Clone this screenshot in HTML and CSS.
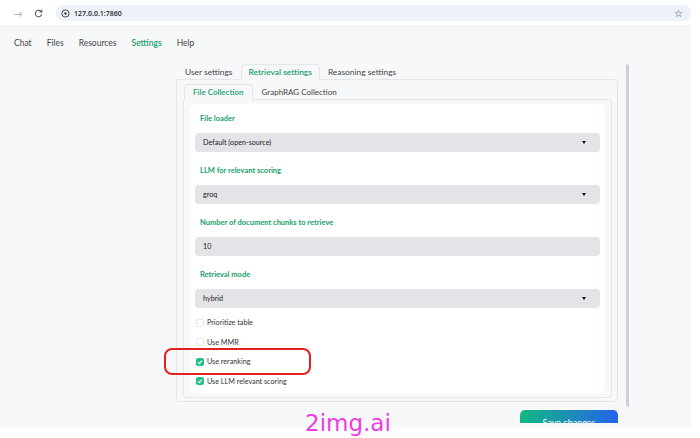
FILE: index.html
```html
<!DOCTYPE html>
<html lang="en">

<head>
    <meta charset="UTF-8">
    <meta name="viewport" content="width=device-width, initial-scale=1.0">
    <title>Settings</title>
    <link rel="stylesheet" href="styles.css">
</head>

<body>

    <!-- Browser bar -->
    <div class="chrome">
        <span class="chrome-btn">&#8594;</span>
        <span class="chrome-btn">
            <svg width="9" height="9" viewBox="0 0 10 10"><path d="M8.2 3.2A3.6 3.6 0 1 0 8.6 6" fill="none" stroke="#555" stroke-width="1.2"/><path d="M6.2 3.4H8.8V0.8" fill="none" stroke="#555" stroke-width="1.2"/></svg>
        </span>
        <div class="address">
            <svg width="9" height="9" viewBox="0 0 10 10"><circle cx="5" cy="5" r="4" fill="none" stroke="#444" stroke-width="1.1"/><circle cx="5" cy="5" r="1.4" fill="#444"/></svg>
            <span class="url">127.0.0.1:7860</span>
            <span class="star">&#9734;</span>
        </div>
    </div>

    <div class="page">
        <nav class="nav">
            <span>Chat</span>
            <span>Files</span>
            <span>Resources</span>
            <span class="active">Settings</span>
            <span>Help</span>
        </nav>

        <main class="settings">
            <div class="tabs top">
                <span class="tab">User settings</span>
                <span class="tab selected">Retrieval settings</span>
                <span class="tab">Reasoning settings</span>
            </div>

            <div class="panel">
                <div class="tabs sub">
                    <span class="tab selected">File Collection</span>
                    <span class="tab">GraphRAG Collection</span>
                </div>

                <div class="subpanel">
                    <div class="card">
                        <div class="field">
                            <label>File loader</label>
                            <div class="select">Default (open-source)</div>
                        </div>
                        <div class="field">
                            <label>LLM for relevant scoring</label>
                            <div class="select">groq</div>
                        </div>
                        <div class="field">
                            <label>Number of document chunks to retrieve</label>
                            <div class="input">10</div>
                        </div>
                        <div class="field">
                            <label>Retrieval mode</label>
                            <div class="select">hybrid</div>
                        </div>

                        <div class="checks">
                            <div class="check"><span class="box"></span>Prioritize table</div>
                            <div class="check"><span class="box"></span>Use MMR</div>
                            <div class="check"><span class="box on"><svg width="6" height="6" viewBox="0 0 6 6"><path d="M1 3.2L2.5 4.6L5 1.5" fill="none" stroke="#fff" stroke-width="1.1"/></svg></span>Use reranking</div>
                            <div class="check"><span class="box on"><svg width="6" height="6" viewBox="0 0 6 6"><path d="M1 3.2L2.5 4.6L5 1.5" fill="none" stroke="#fff" stroke-width="1.1"/></svg></span>Use LLM relevant scoring</div>
                        </div>
                    </div>
                </div>
            </div>

            <div class="actions">
                <button class="save">Save changes</button>
            </div>
        </main>

        <div class="scrollbar"></div>
        <div class="highlight"></div>
    </div>
    <div class="bottom-strip"></div>

    <div class="watermark">2img.ai</div>

</body>

</html>
```

FILE: styles.css
```css
body {
    margin: 0;
    background-color: #fff;
    font-family: Lato, "Noto Sans", sans-serif;
    color: #333;
    position: relative;
    width: 700px;
    height: 438px;
    overflow: hidden;
}

/* browser bar */
.chrome {
    display: flex;
    align-items: center;
    padding-left: 10px;
    gap: 4px;
    border-bottom: 1px solid #ebebeb;
    box-sizing: border-box;
    width: 691px;
    height: 27px;
}

.chrome-btn {
    width: 16px;
    text-align: center;
    color: #aaa;
    font-size: 9px;
    display: flex;
    justify-content: center;
}

.address {
    margin-left: 6px;
    flex: 1;
    height: 16px;
    background-color: #edf1f9;
    border-radius: 8px;
    display: flex;
    align-items: center;
    padding: 0 8px 0 5px;
    gap: 4px;
}

.url {
    font-family: "Noto Sans", sans-serif;
    font-size: 7px;
    font-weight: 600;
    color: #333;
}

.star {
    margin-left: auto;
    font-size: 10px;
    color: #333;
}

/* page */
.page {
    position: relative;
    width: 691px;
    height: 396px;
    background-color: #f7f8fa;
    overflow: hidden;
}

.bottom-strip {
    width: 691px;
    height: 5px;
    background-color: #f7f8fa;
}

.nav {
    height: 32px;
    display: flex;
    align-items: center;
    gap: 15px;
    padding-left: 14px;
    font-size: 8.5px;
    color: #444;
}

.nav .active {
    color: #16a067;
    font-weight: 600;
}

.settings {
    margin: 5px 0 0 176px;
    width: 442px;
}

.tabs {
    display: flex;
    height: 15px;
    position: relative;
    z-index: 1;
}

.tab {
    padding: 0 8px;
    border: 1px solid transparent;
    border-bottom: none;
    font-size: 8px;
    line-height: 15px;
    color: #444;
    white-space: nowrap;
}

.tabs.top .tab {
    font-size: 8.4px;
    padding: 0 7px;
}

.tabs.top .tab:first-child {
    padding-left: 8px;
}

.tab.selected {
    border-color: #e4e6ea;
    border-radius: 4px 4px 0 0;
    background-color: #f7f8fa;
    color: #16a067;
    font-weight: 600;
    margin-bottom: -1px;
}

.panel {
    border: 1px solid #e4e6ea;
    border-radius: 0 4px 4px 4px;
    padding: 4px 5px 3px 6px;
}

.tabs.sub {
    height: 15px;
    padding-left: 1px;
}

.subpanel {
    border: 1px solid #e4e6ea;
    border-radius: 0 3px 3px 3px;
    padding: 4px 6px 4px 6px;
}

.card {
    background-color: #fff;
    border-radius: 6px;
    padding: 9px 5px 2px 5px;
}

.field {
    display: flex;
    flex-direction: column;
    gap: 8px;
    margin-bottom: 13px;
}

.field:nth-child(4) {
    margin-bottom: 5px;
}

label {
    display: block;
    padding-left: 5px;
    height: 12px;
    line-height: 12px;
    font-size: 7.5px;
    font-weight: 700;
    color: #16a067;
}

.select,
.input {
    height: 19px;
    line-height: 19px;
    background-color: #e4e4e8;
    border-radius: 4px;
    padding-left: 8px;
    font-size: 7.2px;
    color: #222;
    position: relative;
}

.select::after {
    content: "";
    position: absolute;
    right: 14px;
    top: 8px;
    border-left: 2.5px solid transparent;
    border-right: 2.5px solid transparent;
    border-top: 3px solid #111;
}

.checks {
    display: flex;
    flex-direction: column;
}

.check {
    height: 19.5px;
    display: flex;
    align-items: center;
    gap: 3px;
    padding-left: 1px;
    font-size: 7.2px;
    color: #333;
}

.box {
    width: 8px;
    height: 8px;
    box-sizing: border-box;
    border: 1px solid #e6e7eb;
    border-radius: 2px;
    background-color: #fff;
    display: flex;
    align-items: center;
    justify-content: center;
}

.box.on {
    background-color: #22bf8a;
    border-color: #22bf8a;
}

.actions {
    display: flex;
    justify-content: flex-end;
    margin-top: 8px;
}

.save {
    width: 98px;
    height: 20px;
    border: none;
    border-radius: 5px 5px 0 0;
    background: linear-gradient(90deg, #12b981, #2563eb);
    color: #fff;
    font-family: Lato, sans-serif;
    font-size: 9px;
    padding: 6px 0 0;
    line-height: 12px;
}

/* overlays */
.scrollbar {
    position: absolute;
    left: 626px;
    top: 37px;
    width: 3px;
    height: 343px;
    border-radius: 2px;
    background-color: #d0d1d7;
}

.highlight {
    position: absolute;
    left: 164px;
    top: 321px;
    width: 147px;
    height: 27px;
    box-sizing: border-box;
    border: 2px solid #e3201e;
    border-radius: 8px;
}

.watermark {
    position: absolute;
    left: 305px;
    top: 409px;
    font-family: "DejaVu Sans", sans-serif;
    font-size: 23px;
    line-height: 28px;
    color: #ee3ee0;
}
```
